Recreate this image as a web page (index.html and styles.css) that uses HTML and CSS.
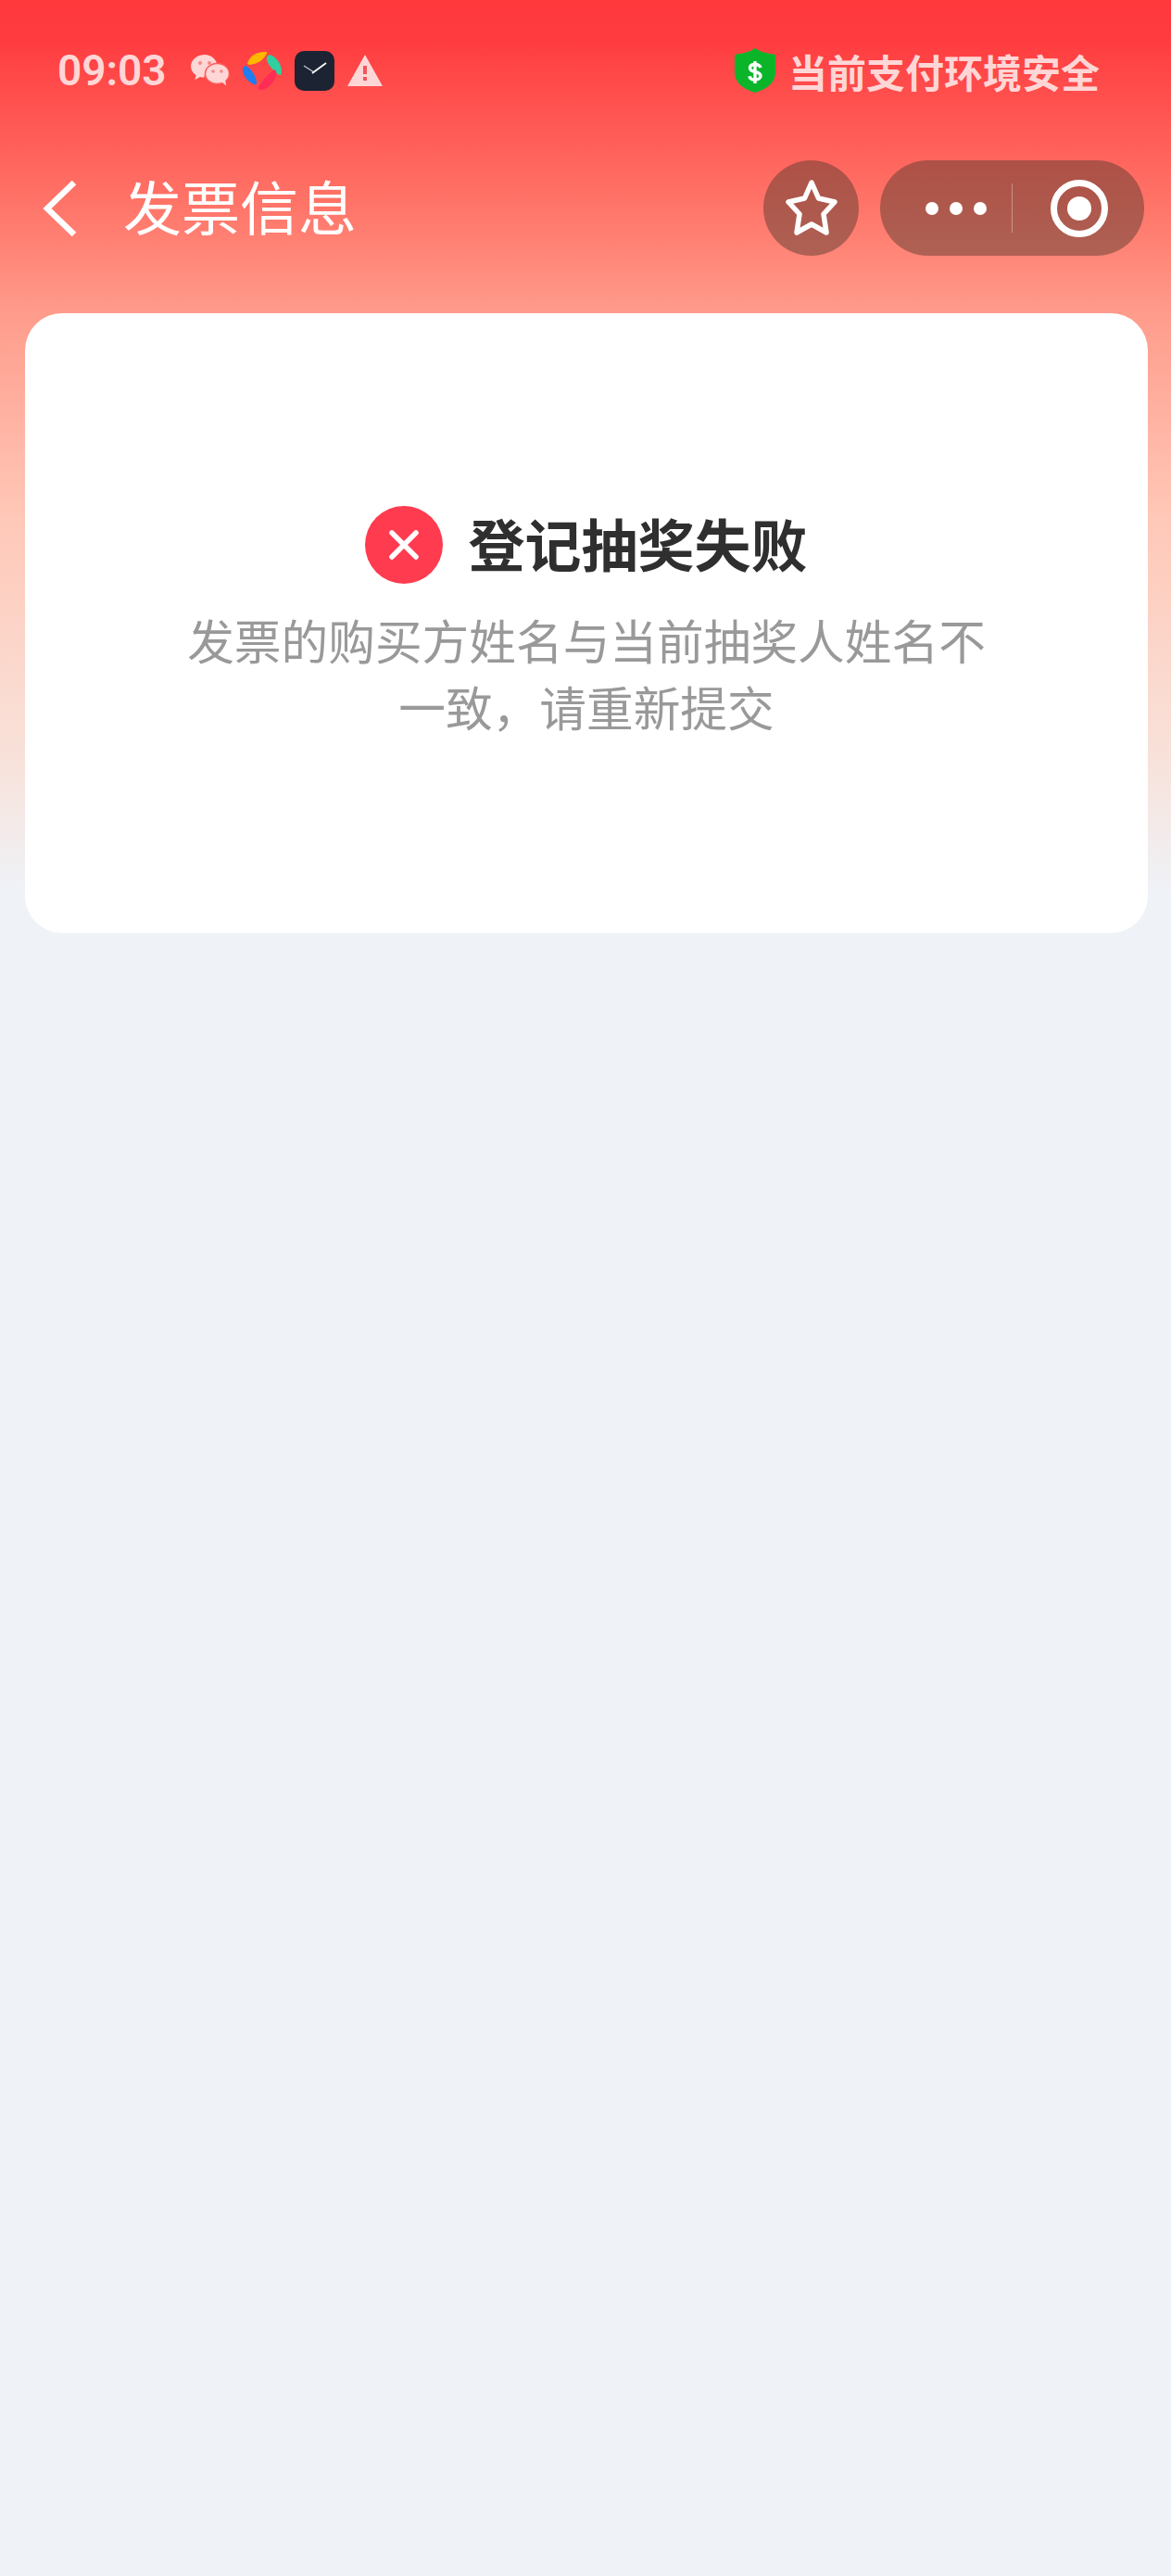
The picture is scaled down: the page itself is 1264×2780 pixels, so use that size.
FILE: index.html
```html
<!DOCTYPE html>
<html lang="zh-CN">
<head>
    <meta charset="UTF-8">
    <title>发票信息</title>
    <link rel="stylesheet" href="styles.css">
</head>
<body>
    <div class="page">
        <div class="status-bar">
            <span class="time">09:03</span>
            <div class="status-icons">
                <!-- wechat -->
                <svg class="ico-wechat" width="42" height="34" viewBox="0 0 42 34">
                    <path d="M15 0C7 0 0 5.500 0 12.500c0 4 2.200 7.300 5.500 9.500l-1 5 5.500-3c1.500.4 3 .6 4.500.6 0-7 6-12.600 14-12.600C28 5 22 0 15 0z" fill="#ffd6d6"/>
                    <ellipse cx="28.500" cy="20.500" rx="13" ry="11" fill="#ffd6d6" stroke="#ff5a58" stroke-width="1.500"/>
                    <path d="M33 29l5 4.500-1-7z" fill="#ffd6d6"/>
                    <circle cx="10" cy="9" r="2" fill="#f28a88"/>
                    <circle cx="20" cy="9" r="2" fill="#f28a88"/>
                    <circle cx="24" cy="18" r="1.800" fill="#f28a88"/>
                    <circle cx="33" cy="18" r="1.800" fill="#f28a88"/>
                </svg>
                <!-- colour app -->
                <svg class="ico-color" width="42" height="42" viewBox="0 0 42 42">
                    <path d="M5 14C7 6 14 1 24 1c2 0 3 1 2 2-3 5-8 10-14 11-3 .8-6 1.500-7 0z" fill="#ffb800"/>
                    <path d="M27 5c1-1 3-1 5 0 6 4 10 10 10 18 0 3-2 4-4 2-5-4-10-9-12-15-.4-2 0-4 1-5z" fill="#2fcf9f"/>
                    <path d="M1 17c1-1 3-1 4 0 5 4 9 10 10 16 .3 3-1 4-3 3C5 33 0 26 0 20c0-1 .4-2 1-3z" fill="#1f7df0"/>
                    <path d="M33 21c1-1 3 0 3 1 1 3 0 7-3 11-4 6-9 9-14 9-2 0-3-2-2-3 4-7 9-13 16-18z" fill="#ff2d55"/>
                </svg>
                <!-- clock app -->
                <div class="ico-clock">
                    <svg width="43" height="43" viewBox="0 0 43 43">
                        <path d="M10 16l11 7" stroke="#c9ced8" stroke-width="1.200" fill="none"/>
                        <path d="M19 24l15-11" stroke="#fff" stroke-width="1.800" fill="none"/>
                    </svg>
                </div>
                <!-- warning -->
                <svg class="ico-warn" width="38" height="34" viewBox="0 0 38 34">
                    <path d="M19 0L38 34H0z" fill="#ffd6d6"/>
                    <rect x="17" y="12" width="4" height="9" fill="#f0555a"/>
                    <rect x="17" y="24" width="4" height="4" fill="#f0555a"/>
                </svg>
            </div>
            <div class="pay-safe">
                <svg width="46" height="48" viewBox="0 0 46 48">
                    <path d="M23 0c6 4 13 6 20 6.500 1.500.2 2 1 2 2V26c0 11-9 18-22 22C10 44 1 37 1 26V8.500c0-1 .5-1.800 2-2C10 6 17 4 23 0z" fill="#0bb52a"/>
                    <path d="M29 21c-.8-2.500-3-3.500-6-3.500-3.300 0-5.500 1.500-5.500 4 0 5.500 11.500 2.500 11.500 8.500 0 2.500-2.500 4-6 4-3.300 0-5.500-1.200-6.200-3.800M23 14v24" fill="none" stroke="#fff" stroke-width="3.400"/>
                </svg>
                <span>当前支付环境安全</span>
            </div>
        </div>

        <div class="nav-bar">
            <svg class="back" width="38" height="62" viewBox="0 0 38 62">
                <path d="M34 3L5 31l29 28" fill="none" stroke="#fff" stroke-width="6.500"/>
            </svg>
            <h1 class="nav-title">发票信息</h1>
            <div class="star-btn">
                <svg width="60" height="62" viewBox="0 0 60 62">
                    <path d="M30 3l7.500 17 17.500 4-12 13 3 20-16-9-16 9 3-20-12-13 17.500-4z" fill="none" stroke="#fff" stroke-width="5.500" stroke-linejoin="round"/>
                </svg>
            </div>
            <div class="capsule">
                <div class="capsule-more">
                    <i></i><i></i><i></i>
                </div>
                <div class="capsule-line"></div>
                <div class="capsule-close">
                    <svg width="62" height="62" viewBox="0 0 62 62">
                        <circle cx="31" cy="31" r="27.500" fill="none" stroke="#fff" stroke-width="7"/>
                        <circle cx="31" cy="31" r="13" fill="#fff"/>
                    </svg>
                </div>
            </div>
        </div>

        <div class="card">
            <div class="result-head">
                <svg width="84" height="84" viewBox="0 0 84 84">
                    <circle cx="42" cy="42" r="42" fill="#ff3b50"/>
                    <path d="M29 29l26 26M55 29L29 55" stroke="#fff" stroke-width="5.500" stroke-linecap="round"/>
                </svg>
                <h2>登记抽奖失败</h2>
            </div>
            <p class="result-msg">发票的购买方姓名与当前抽奖人姓名不一致，请重新提交</p>
        </div>
    </div>
</body>
</html>
```

FILE: styles.css
```css
html, body {
    margin: 0;
    padding: 0;
}

body {
    font-family: "Liberation Sans", "Noto Sans CJK SC", sans-serif;
    background-color: #eff2f7;
}

.page {
    width: 1264px;
    height: 2780px;
    background: linear-gradient(to bottom, #ff383c 0, #ff3b3f 40px, #ff7468 220px, #ff9c8c 340px, #ffc8b8 560px, #f8e2da 820px, #eff2f7 960px);
    overflow: hidden;
}

.status-bar {
    height: 52px;
    padding: 50px 77px 0 62px;
    display: flex;
    align-items: center;
}

.time {
    font-family: Roboto, sans-serif;
    font-size: 46px;
    font-weight: 600;
    color: #ffd6d6;
    width: 144px;
}

.status-icons {
    display: flex;
    align-items: center;
    gap: 14px;
}

.ico-clock {
    width: 43px;
    height: 43px;
    border-radius: 10px;
    background-color: #1c2333;
}

.ico-clock svg {
    display: block;
}

.pay-safe {
    margin-left: auto;
    display: flex;
    align-items: center;
    gap: 13px;
    font-size: 42px;
    font-weight: 700;
    color: #ffd6d6;
}

.pay-safe svg {
    display: block;
}

.nav-bar {
    margin-top: 71px;
    height: 103px;
    padding: 0 29px 0 46px;
    display: flex;
    align-items: center;
}

.back {
    display: block;
}

.nav-title {
    margin: 3px 0 0 49px;
    font-size: 63px;
    font-weight: 400;
    line-height: 1;
    color: #fff;
}

.star-btn {
    margin-left: auto;
    width: 103px;
    height: 103px;
    border-radius: 50%;
    background-color: rgba(93, 60, 48, 0.5);
    display: flex;
    align-items: center;
    justify-content: center;
}

.capsule {
    margin-left: 23px;
    width: 285px;
    height: 103px;
    border-radius: 52px;
    background-color: rgba(93, 60, 48, 0.5);
    display: flex;
    align-items: center;
}

.capsule-more {
    flex: 1;
    display: flex;
    justify-content: center;
    gap: 12px;
    padding-left: 21px;
}

.capsule-more i {
    width: 14px;
    height: 14px;
    border-radius: 50%;
    background-color: #fff;
}

.capsule-line {
    width: 1px;
    height: 53px;
    background-color: rgba(255, 255, 255, 0.35);
}

.capsule-close {
    width: 140px;
    padding-left: 2px;
    display: flex;
    justify-content: center;
}

.card {
    margin: 62px 25px 0 27px;
    height: 669px;
    box-sizing: border-box;
    padding-top: 208px;
    background-color: #fff;
    border-radius: 40px;
}

.result-head {
    display: flex;
    align-items: flex-start;
    justify-content: center;
    gap: 27px;
}

.result-head h2 {
    margin: 3px 0 0;
    font-size: 61px;
    font-weight: 700;
    line-height: 84px;
    color: #2f2f2f;
}

.result-msg {
    margin: 26px auto 0;
    width: 870px;
    font-size: 50.700px;
    line-height: 72px;
    text-align: center;
    color: #999;
}
```
